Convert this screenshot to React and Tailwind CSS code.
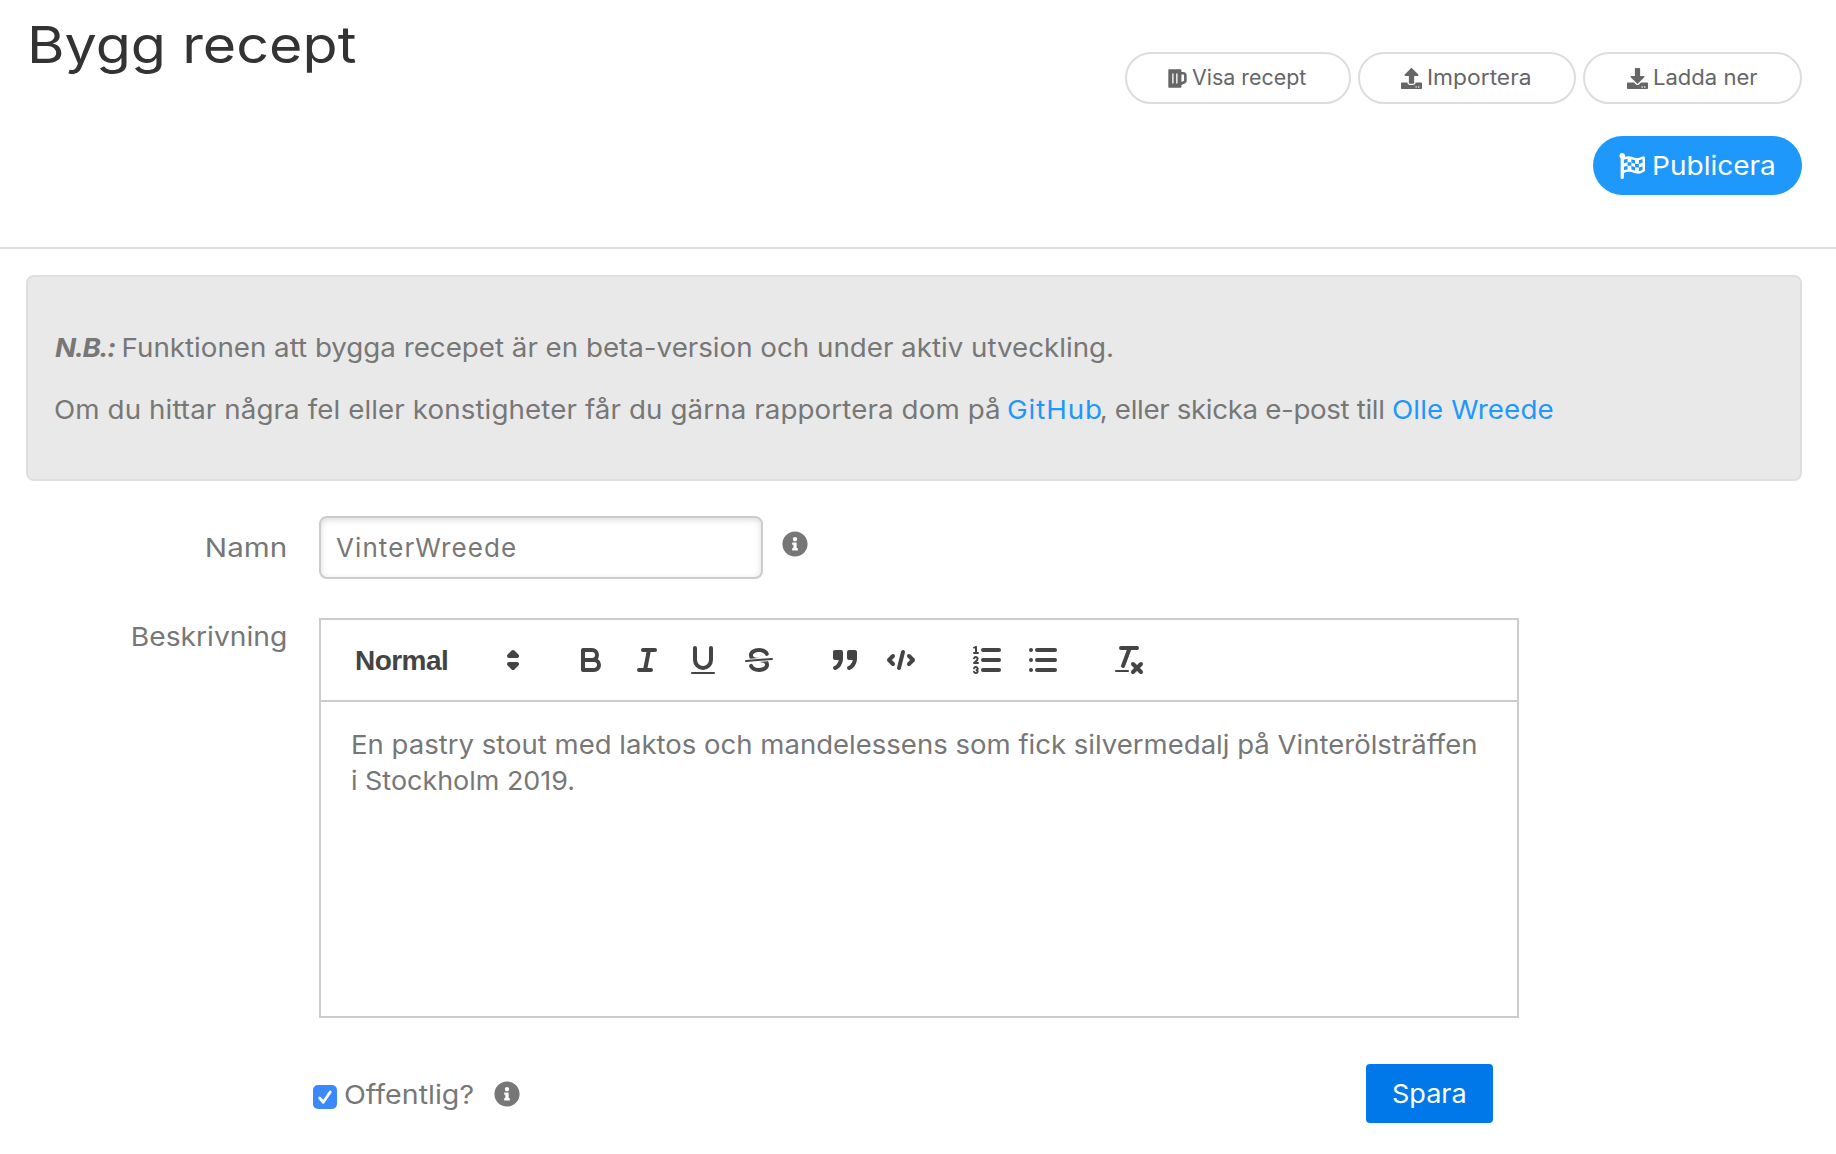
import React from "react";
import { FaBeer, FaUpload, FaDownload, FaFlagCheckered, FaInfoCircle } from "react-icons/fa";

function Glyph({ children }) {
  return (
    <svg viewBox="0 0 18 18" className="size-9 fill-none stroke-[#444] stroke-2 [stroke-linecap:round] [stroke-linejoin:round]">
      {children}
    </svg>
  );
}

function ToolButton({ label, children }) {
  return (
    <button type="button" aria-label={label} className="flex h-12 w-14 items-center justify-center">
      <Glyph>{children}</Glyph>
    </button>
  );
}

function Toolbar() {
  return (
    <div className="flex h-[82px] items-center gap-[30px] border-b-2 border-[#ccc] pl-4">
      <div className="flex h-12 w-[196px] items-center justify-between pl-[18px] text-[28px] font-bold tracking-[-0.54px] text-[#444] font-['Liberation_Sans',sans-serif]">
        <span className="pt-0.5 leading-[48px]">Normal</span>
        <span className="mr-0.5">
          <Glyph>
            <polygon points="7 11 9 13 11 11 7 11" />
            <polygon points="7 7 9 5 11 7 7 7" />
          </Glyph>
        </span>
      </div>
      <div className="flex">
        <ToolButton label="Fet">
          <path d="M5,4H9.5A2.5,2.5,0,0,1,12,6.5v0A2.5,2.5,0,0,1,9.5,9H5V4Z" />
          <path d="M5,9h5.5A2.5,2.5,0,0,1,13,11.5v0A2.5,2.5,0,0,1,10.5,14H5V9Z" />
        </ToolButton>
        <ToolButton label="Kursiv">
          <line x1="7" x2="13" y1="4" y2="4" />
          <line x1="5" x2="11" y1="14" y2="14" />
          <line x1="8" x2="10" y1="14" y2="4" />
        </ToolButton>
        <ToolButton label="Understruken">
          <path d="M5,3V9a4.012,4.012,0,0,0,4,4H9a4.012,4.012,0,0,0,4-4V3" />
          <rect className="fill-[#444] stroke-none" height="1" rx="0.5" ry="0.5" width="12" x="3" y="15" />
        </ToolButton>
        <ToolButton label="Genomstruken">
          <line className="stroke-1" x1="15.5" x2="2.5" y1="8.5" y2="9.5" />
          <path className="fill-[#444] stroke-none" d="M9.007,8C6.542,7.791,6,7.519,6,6.5,6,5.792,7.283,5,9,5c1.571,0,2.765.679,2.969,1.309a1,1,0,0,0,1.9-.617C13.356,4.106,11.354,3,9,3,6.2,3,4,4.538,4,6.5a3.2,3.2,0,0,0,.5,1.843Z" />
          <path className="fill-[#444] stroke-none" d="M8.984,10C11.457,10.208,12,10.479,12,11.5c0,0.708-1.283,1.5-3,1.5-1.571,0-2.765-.679-2.969-1.309a1,1,0,1,0-1.9.617C4.644,13.894,6.646,15,9,15c2.8,0,5-1.538,5-3.5a3.2,3.2,0,0,0-.5-1.843Z" />
        </ToolButton>
      </div>
      <div className="flex">
        <ToolButton label="Citat">
          <rect className="fill-[#444]" height="3" width="3" x="4" y="5" />
          <rect className="fill-[#444]" height="3" width="3" x="11" y="5" />
          <path className="fill-[#444]" d="M7,8c0,4.031-3,5-3,5" />
          <path className="fill-[#444]" d="M14,8c0,4.031-3,5-3,5" />
        </ToolButton>
        <ToolButton label="Kod">
          <polyline points="5 7 3 9 5 11" />
          <polyline points="13 7 15 9 13 11" />
          <line x1="10" x2="8" y1="5" y2="13" />
        </ToolButton>
      </div>
      <div className="flex">
        <ToolButton label="Numrerad lista">
          <line x1="7" x2="15" y1="4" y2="4" />
          <line x1="7" x2="15" y1="9" y2="9" />
          <line x1="7" x2="15" y1="14" y2="14" />
          <line className="stroke-1" x1="2.5" x2="4.5" y1="5.5" y2="5.5" />
          <path className="fill-[#444] stroke-none" d="M3.5,6A0.5,0.5,0,0,1,3,5.5V3.085l-0.276.138A0.5,0.5,0,0,1,2.053,3c-0.124-.247-0.023-0.324.224-0.447l1-.5A0.5,0.5,0,0,1,4,2.5v3A0.5,0.5,0,0,1,3.5,6Z" />
          <path className="stroke-1" d="M4.5,10.5h-2c0-.234,1.85-1.076,1.85-2.234A0.959,0.959,0,0,0,2.5,8.156" />
          <path className="stroke-1" d="M2.5,14.846a0.959,0.959,0,0,0,1.85-.109A0.7,0.7,0,0,0,3.75,14a0.688,0.688,0,0,0,.6-0.736,0.959,0.959,0,0,0-1.85-.109" />
        </ToolButton>
        <ToolButton label="Punktlista">
          <line x1="6" x2="15" y1="4" y2="4" />
          <line x1="6" x2="15" y1="9" y2="9" />
          <line x1="6" x2="15" y1="14" y2="14" />
          <line x1="3" x2="3" y1="4" y2="4" />
          <line x1="3" x2="3" y1="9" y2="9" />
          <line x1="3" x2="3" y1="14" y2="14" />
        </ToolButton>
      </div>
      <ToolButton label="Rensa formatering">
        <line x1="5" x2="13" y1="3" y2="3" />
        <line x1="6" x2="9.35" y1="12" y2="3" />
        <line x1="11" x2="15" y1="11" y2="15" />
        <line x1="15" x2="11" y1="11" y2="15" />
        <rect className="fill-[#444] stroke-none" height="1" rx="0.5" ry="0.5" width="7" x="2" y="14" />
      </ToolButton>
    </div>
  );
}

const pill = "flex h-[52px] items-center rounded-full border-2 border-[#ddd] text-[21px] leading-[46px] text-[#666] whitespace-nowrap";

function Header() {
  return (
    <header className="flex h-[249px] justify-between border-b-2 border-[#ddd] pr-[34px] pl-[27px]">
      <h1 className="origin-left scale-x-[1.125] pt-[14px] text-[51px] leading-[61px] text-[#333]">Bygg recept</h1>
      <div className="flex flex-col items-end gap-8 pt-[52px]">
        <div className="flex gap-[7px]">
          <button type="button" className={`${pill} w-[226px] gap-[5px] pl-[41px]`}>
            <FaBeer className="h-[21px] w-[19px]" />
            <span className="origin-left scale-x-[1.02]">Visa recept</span>
          </button>
          <button type="button" className={`${pill} w-[218px] gap-[5px] pl-[41px]`}>
            <FaUpload className="size-[21px]" />
            <span className="origin-left scale-x-[1.085]">Importera</span>
          </button>
          <button type="button" className={`${pill} w-[219px] gap-[5px] pl-[42px]`}>
            <FaDownload className="size-[21px]" />
            <span className="origin-left scale-x-[1.05]">Ladda ner</span>
          </button>
        </div>
        <button type="button" className="flex h-[59px] w-[209px] items-center gap-[7px] rounded-full bg-[#1e98fa] pl-[26px] text-white">
          <FaFlagCheckered className="size-[26px]" />
          <span className="origin-left scale-x-[1.078]">Publicera</span>
        </button>
      </div>
    </header>
  );
}

function Notice() {
  return (
    <section className="mt-[26px] ml-[26px] h-[206px] w-[1776px] rounded-lg border-2 border-[#dfdfdf] bg-[#e9e9e9] pt-[53px] pl-[26px] leading-9 whitespace-nowrap">
      <p className="origin-left scale-x-[1.066] w-fit pl-px">
        <em className="mr-[-1px] font-bold tracking-[-1.4px]">N.B.:</em>
        <span> Funktionen att bygga recepet är en beta-version och under aktiv utveckling.</span>
      </p>
      <p className="mt-[26px] w-fit origin-left scale-x-[1.066]">
        <span className="mr-[-1.5px] tracking-[0.1px]">Om du hittar några fel eller konstigheter får du gärna rapportera dom på </span>
        <a className="mr-[-3px] tracking-[0.87px] text-[#1e98fa]">GitHub</a>
        <span className="tracking-[-0.33px]">, eller skicka e-post till </span>
        <a className="tracking-[0.12px] text-[#1e98fa]">Olle Wreede</a>
      </p>
    </section>
  );
}

export default function App() {
  return (
    <main className="h-[1154px] w-[1836px] overflow-hidden bg-white text-[26px] leading-9 text-[#777] font-['Inter',sans-serif]">
      <Header />
      <Notice />
      <form>
        <div className="mt-[35px] flex h-[63px] items-center">
          <label className="w-[319px] pr-[32px] text-right">
            <span className="inline-block origin-right scale-x-[1.14]">Namn</span>
          </label>
          <input
            type="text"
            defaultValue="VinterWreede"
            className="h-[63px] w-[444px] rounded-lg border-2 border-[#ccc] bg-white pl-[15px] tracking-[1.08px] shadow-[inset_0_2px_6px_rgba(0,0,0,0.14)] outline-none"
          />
          <FaInfoCircle className="mb-[7px] ml-[19px] size-[26px]" />
        </div>
        <div className="mt-[39px] flex">
          <label className="w-[319px] pr-[32px] text-right leading-[37px]">
            <span className="inline-block origin-right scale-x-[1.085]">Beskrivning</span>
          </label>
          <div className="h-[400px] w-[1200px] border-2 border-[#ccc]">
            <Toolbar />
            <div className="pt-[25px] pl-[30px] whitespace-nowrap">
              <p className="w-fit origin-left scale-x-[1.059]">En pastry stout med laktos och mandelessens som fick silvermedalj på Vinterölsträffen</p>
              <p className="w-fit origin-left scale-x-[1.035]">i Stockholm 2019.</p>
            </div>
          </div>
        </div>
        <div className="mt-[46px] flex h-[59px] items-center pr-[343px] pl-[313px]">
          <span className="mt-[7px] flex size-6 items-center justify-center rounded-[5px] bg-[#3b88fd]">
            <svg viewBox="0 0 24 24" className="size-6 fill-none stroke-white stroke-[2.8] [stroke-linecap:round] [stroke-linejoin:round]">
              <path d="M6.6 13 L10.3 17.2 L17.2 7" />
            </svg>
          </span>
          <label className="mt-[2px] ml-[7px] origin-left scale-x-[1.1]">Offentlig?</label>
          <FaInfoCircle className="ml-[32px] mt-[1px] size-[26px]" />
          <button type="button" className="ml-auto flex h-[59px] w-[127px] items-center rounded-[4px] bg-[#0078ea] pl-[26px] text-white">
            <span className="origin-left scale-x-[1.04]">Spara</span>
          </button>
        </div>
      </form>
    </main>
  );
}
